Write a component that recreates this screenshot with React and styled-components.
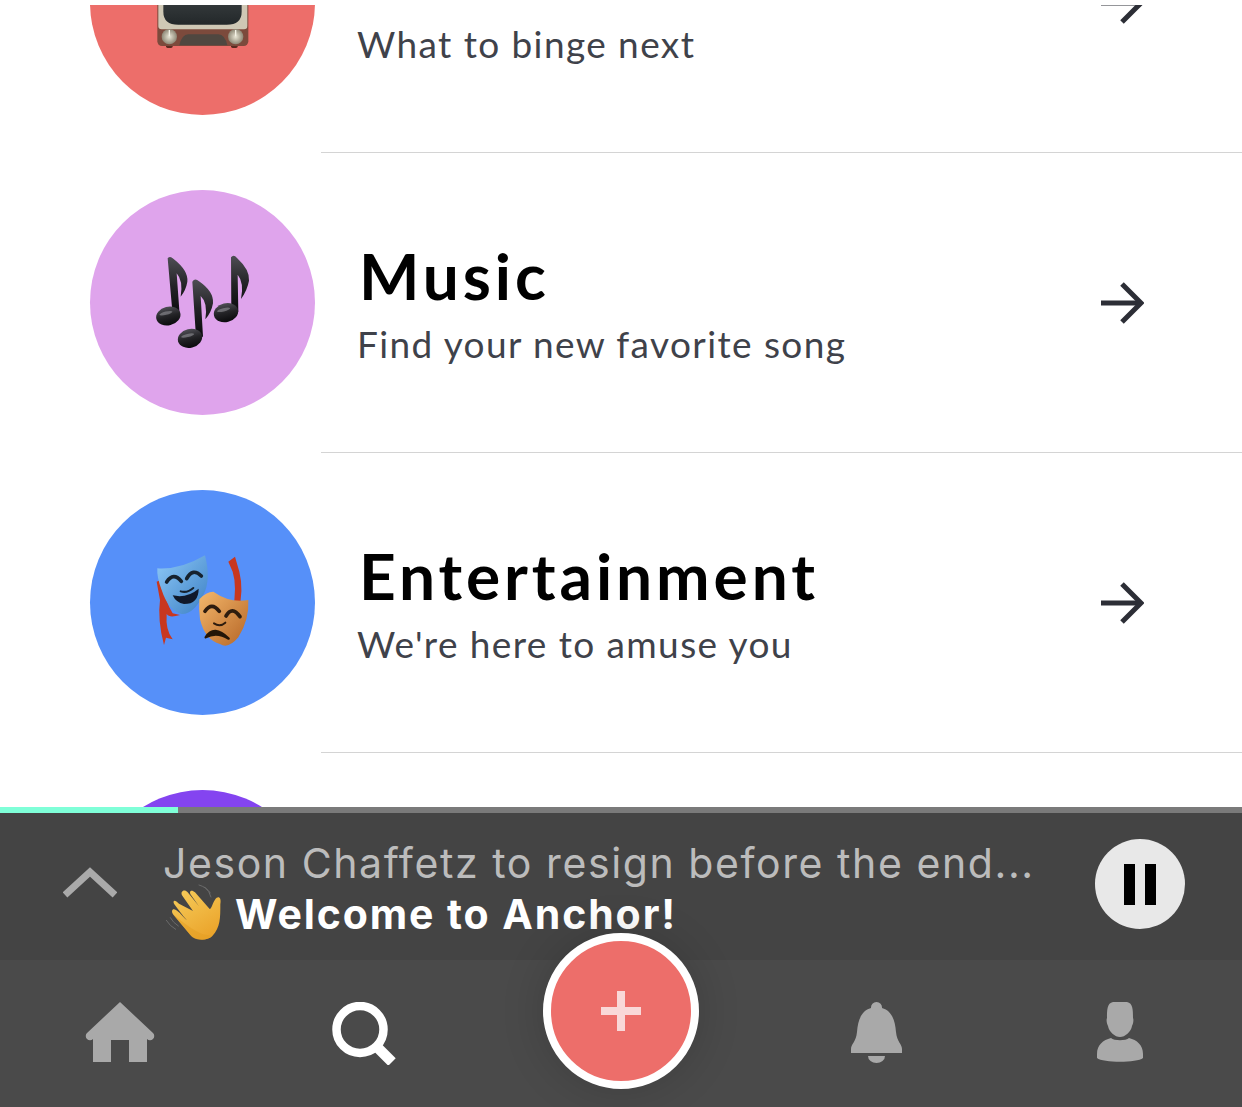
import React from "react";
import styled, { createGlobalStyle } from "styled-components";

const Global = createGlobalStyle`
  html, body { margin: 0; padding: 0; background: #fff; }
  body { font-family: "Lato", "Liberation Sans", sans-serif; }
`;

const Page = styled.div`
  position: relative;
  width: 1242px;
  height: 1107px;
  overflow: hidden;
  display: flex;
  flex-direction: column;
  background: #fff;
`;

const Viewport = styled.div`
  height: 802px;
  margin-top: 5px;
  overflow: hidden;
  flex: none;
`;

const List = styled.div`
  margin-top: -152px;
`;

const Row = styled.div`
  height: 300px;
  display: flex;
  align-items: center;
  padding-left: 90px;
  box-sizing: border-box;
`;

const Circle = styled.div`
  width: 225px;
  height: 225px;
  margin-bottom: 2px;
  border-radius: 50%;
  background: ${(p) => p.$color};
  flex: none;
  display: flex;
  align-items: center;
  justify-content: center;
  overflow: visible;
`;

const Body = styled.div`
  flex: 1;
  height: 300px;
  margin-left: 6px;
  padding: 0 98px 0 37px;
  display: flex;
  align-items: center;
  justify-content: space-between;
  border-bottom: 1px solid #d4d4d4;
  box-sizing: border-box;
`;

const Texts = styled.div`
  display: flex;
  flex-direction: column;
  gap: 11px;
  margin-top: 2px;
`;

const Title = styled.div`
  font-family: "Lato", sans-serif;
  font-weight: 700;
  font-size: 64px;
  line-height: 70px;
  letter-spacing: 3.9px;
  color: #000;
  padding-left: 1px;
`;

const Subtitle = styled.div`
  font-family: "Lato", sans-serif;
  font-size: 37px;
  line-height: 44px;
  letter-spacing: 1.4px;
  margin-left: -1px;
  color: #3f424a;
`;

const ProgressTrack = styled.div`
  height: 6px;
  background: #7a7a7a;
  flex: none;
`;

const ProgressFill = styled.div`
  height: 100%;
  background: #7fffd8;
`;

const Player = styled.div`
  height: 147px;
  flex: none;
  background: #444444;
  display: flex;
  align-items: flex-start;
  padding-left: 63px;
  padding-right: 57px;
  box-sizing: border-box;
`;

const ChevronWrap = styled.div`
  width: 54px;
  margin-top: 54px;
  flex: none;
  display: flex;
`;

const PlayerText = styled.div`
  margin-left: 46px;
  flex: 1;
  min-width: 0;
  padding-top: 25px;
`;

const Track = styled.div`
  font-family: "Inter", sans-serif;
  font-size: 41px;
  line-height: 50px;
  letter-spacing: 1.58px;
  color: #bcbcbc;
  white-space: nowrap;
`;

const Episode = styled.div`
  display: flex;
  align-items: center;
  margin-top: -7px;
  font-family: "Inter", sans-serif;
  font-weight: 700;
  font-size: 41px;
  line-height: 50px;
  letter-spacing: 1.9px;
  color: #fff;
  white-space: nowrap;
`;

const PauseBtn = styled.div`
  width: 90px;
  height: 90px;
  border-radius: 50%;
  background: #e8e8e8;
  margin-top: 26px;
  flex: none;
  display: flex;
  align-items: center;
  justify-content: center;
  gap: 10px;
`;

const PauseBar = styled.span`
  width: 11px;
  height: 41px;
  background: #000;
`;

const Nav = styled.div`
  height: 147px;
  flex: none;
  background: #4a4a4a;
  display: grid;
  grid-template-columns: 240px 248px 266px 244px 244px;
  justify-items: center;
  align-items: start;
  padding-top: 42px;
  box-sizing: border-box;
`;

const Fab = styled.div`
  position: absolute;
  left: 543px;
  top: 933px;
  width: 156px;
  height: 156px;
  box-sizing: border-box;
  border-radius: 50%;
  border: 8px solid #fff;
  background: #ed6e6a;
  box-shadow: 0 0 44px rgba(0, 0, 0, 0.16);
  display: flex;
  align-items: center;
  justify-content: center;
`;

const Arrow = () => (
  <svg width="44" height="44" viewBox="0 0 44 44" fill="none" stroke="#2c2e36" strokeWidth="5">
    <path d="M1 22 H40" />
    <path d="M22 3 L41 22 L22 41" />
  </svg>
);

const TV = () => (
  <svg width="125" height="125" viewBox="0 0 375 375">
    <defs>
      <linearGradient id="tvs" x1="0" y1="0" x2="0" y2="1">
        <stop offset="0" stopColor="#555a5c" />
        <stop offset="1" stopColor="#23282a" />
      </linearGradient>
      <radialGradient id="tvk">
        <stop offset="0" stopColor="#e9e6d6" />
        <stop offset="1" stopColor="#8d8775" />
      </radialGradient>
    </defs>
    <rect x="78" y="308" width="20" height="16" rx="5" fill="#5a2a20" />
    <rect x="273" y="308" width="20" height="16" rx="5" fill="#5a2a20" />
    <rect x="52" y="60" width="273" height="258" rx="14" fill="#7c4a3c" />
    <rect x="55" y="60" width="267" height="208" rx="10" fill="#cfc8b5" />
    <path d="M70 60 H305 V215 Q305 254 260 254 H115 Q70 254 70 215 Z" fill="url(#tvs)" />
    <path d="M118 316 Q125 284 145 283 H235 Q255 284 262 316 Z" fill="#4f4740" />
    <circle cx="88" cy="290" r="23" fill="url(#tvk)" />
    <circle cx="287" cy="290" r="23" fill="url(#tvk)" />
    <rect x="86" y="270" width="4" height="18" fill="#f4f2e6" />
    <rect x="285" y="270" width="4" height="18" fill="#f4f2e6" />
  </svg>
);

const Notes = () => (
  <svg width="125" height="125" viewBox="0 0 375 375">
    <defs>
      <linearGradient id="nt" x1="0" y1="0" x2="0" y2="1">
        <stop offset="0" stopColor="#4e4e54" />
        <stop offset="0.5" stopColor="#232326" />
        <stop offset="1" stopColor="#0a0a0c" />
      </linearGradient>
    </defs>
    {[
      { h: [85, 228], s: "M83 55 Q90 46 100 56 Q146 92 142 125 Q138 150 122 170 Q130 122 110 100 L119 225 L98 225 Z" },
      { h: [150, 295], s: "M157 125 Q165 112 177 124 Q222 155 219 190 Q214 218 196 238 Q204 188 182 168 L189 290 L168 290 Z" },
      { h: [258, 218], s: "M273 52 Q281 42 291 54 Q330 90 327 122 Q322 150 303 177 Q313 128 293 104 L295 215 L274 215 Z" },
    ].map((n, i) => (
      <g key={i} fill="url(#nt)">
        <path d={n.s} />
        <ellipse cx={n.h[0]} cy={n.h[1]} rx="37" ry="28" transform={`rotate(-14 ${n.h[0]} ${n.h[1]})`} />
        <ellipse cx={n.h[0] - 5} cy={n.h[1] - 10} rx="20" ry="5" fill="#9a9aa0" opacity="0.55" transform={`rotate(-14 ${n.h[0]} ${n.h[1]})`} />
      </g>
    ))}
  </svg>
);

const Masks = () => (
  <svg width="125" height="125" viewBox="0 0 375 375">
    <defs>
      <linearGradient id="mb" x1="0" y1="0" x2="1" y2="1">
        <stop offset="0" stopColor="#8fcaf8" />
        <stop offset="1" stopColor="#3b7fc4" />
      </linearGradient>
      <linearGradient id="mo" x1="0" y1="0" x2="1" y2="1">
        <stop offset="0" stopColor="#f4b86c" />
        <stop offset="1" stopColor="#b56526" />
      </linearGradient>
    </defs>
    <path d="M50 125 L62 120 Q78 190 98 220 L120 225 Q88 235 80 222 Q76 270 98 298 L78 293 L72 315 Q52 240 60 180 Z" fill="#c8371f" />
    <path d="M265 65 L285 50 L298 95 Q312 150 295 215 L278 215 Q292 140 278 95 Z" fill="#c8371f" />
    <path d="M52 85 Q120 90 195 46 Q214 120 190 165 Q160 224 125 222 Q85 212 65 150 Q50 112 52 85 Z" fill="url(#mb)" />
    <path d="M80 126 Q100 95 124 124" fill="none" stroke="#16222e" strokeWidth="11" strokeLinecap="round" />
    <path d="M140 116 Q158 82 184 108" fill="none" stroke="#16222e" strokeWidth="11" strokeLinecap="round" />
    <path d="M122 154 Q142 160 160 144" fill="none" stroke="#16222e" strokeWidth="6" strokeLinecap="round" />
    <path d="M98 166 Q140 176 176 146 Q176 192 132 192 Q108 188 98 166 Z" fill="#10192a" />
    <path d="M178 178 Q198 155 220 155 Q270 190 325 180 Q328 240 295 292 Q265 328 240 312 Q195 300 180 238 Q176 205 178 178 Z" fill="url(#mo)" />
    <path d="M195 214 Q215 184 238 214" fill="none" stroke="#2e1c0e" strokeWidth="11" strokeLinecap="round" />
    <path d="M258 228 Q276 196 300 230" fill="none" stroke="#2e1c0e" strokeWidth="11" strokeLinecap="round" />
    <path d="M222 250 Q240 262 256 248" fill="none" stroke="#2e1c0e" strokeWidth="6" strokeLinecap="round" />
    <path d="M197 292 Q222 252 266 296 Q230 274 197 292 Z" fill="#241608" stroke="#241608" strokeWidth="7" strokeLinejoin="round" />
  </svg>
);

const WaveIcon = styled.svg`
  flex: none;
  margin-right: 6px;
`;

const Wave = () => (
  <WaveIcon width="66" height="66" viewBox="0 0 198 198">
    <defs>
      <linearGradient id="hd" x1="0" y1="0" x2="0.6" y2="1">
        <stop offset="0" stopColor="#f6cd5c" />
        <stop offset="1" stopColor="#eba52c" />
      </linearGradient>
    </defs>
    <g fill="none" stroke="#6a6a6a" strokeWidth="3" strokeLinecap="round">
      <path d="M125 18 Q140 30 144 48" />
      <path d="M108 12 Q130 18 142 36" />
      <path d="M10 118 Q20 135 38 145" />
      <path d="M22 110 Q30 125 46 135" />
    </g>
    <path
      d="M48 68 C34 52 28 60 34 70 C45 85 60 105 72 118 C60 108 48 92 40 88 C28 80 24 90 30 100 L82 162 C95 178 130 182 148 165 C172 140 172 110 172 70 C176 50 166 42 156 56 C148 68 146 82 140 84 L96 34 C86 24 76 30 84 42 L108 76 L74 34 C64 22 50 32 58 44 L90 90 Z"
      fill="url(#hd)"
    />
    <path d="M30 100 L84 164 C95 178 130 182 148 165 L120 160 Q90 150 30 100 Z" fill="#e49d22" opacity="0.5" />
  </WaveIcon>
);

const Chevron = () => (
  <svg width="54" height="31" viewBox="0 0 54 31" fill="none" stroke="#aaaaaa" strokeWidth="7">
    <path d="M2 28 L27 5 L52 28" />
  </svg>
);

const Home = () => (
  <svg width="70" height="61" viewBox="0 0 70 61" fill="#a9a9a9">
    <path d="M35 0 L68 31 A4 4 0 0 1 62 37 V60 H44 V38 H26 V60 H8 V37 A4 4 0 0 1 2 31 Z" />
  </svg>
);

const Search = () => (
  <svg width="64" height="63" viewBox="0 0 64 63" fill="none" stroke="#fff">
    <circle cx="28" cy="27.5" r="23.5" strokeWidth="8.5" />
    <path d="M44 44 L60 60" strokeWidth="10.5" />
  </svg>
);

const Bell = () => (
  <svg width="53" height="61" viewBox="0 0 53 61" fill="#a9a9a9">
    <path d="M26.5 0 A5.5 5.5 0 0 1 32 6 C42 9 45 18 46 30 C47 40 52 42 52 47 V51 H1 V47 C1 42 6 40 7 30 C8 18 11 9 21 6 A5.5 5.5 0 0 1 26.5 0 Z" />
    <path d="M18 54 H35 A8.5 7 0 0 1 18 54 Z" />
  </svg>
);

const User = () => (
  <svg width="46" height="61" viewBox="0 0 46 61" fill="#a9a9a9">
    <path d="M16 0 H30 C36 1 36 8 36 16 C37 18 36 22 35 24 C34 30 28 35 23 35 C18 35 12 30 11 24 C10 22 9 18 10 16 C10 8 10 1 16 0 Z" />
    <path d="M14 36 C17 39 29 39 32 36 C40 38 46 43 46 52 V56 C40 61 6 61 0 56 V52 C0 43 6 38 14 36 Z" />
  </svg>
);

const Plus = () => (
  <svg width="40" height="40" viewBox="0 0 40 40" fill="#f9d8d8">
    <path d="M16 0 H24 V16 H40 V24 H24 V40 H16 V24 H0 V16 H16 Z" />
  </svg>
);

const rows = [
  { color: "#ed6e6a", icon: <TV />, title: "TV & Film", sub: "What to binge next" },
  { color: "#dfa4ec", icon: <Notes />, title: "Music", sub: "Find your new favorite song" },
  { color: "#5690f9", icon: <Masks />, title: "Entertainment", sub: "We're here to amuse you" },
  { color: "#8444f0", icon: null, title: "Politics", sub: "" },
];

export default function App() {
  return (
    <Page>
      <Global />
      <Viewport>
        <List>
          {rows.map((r) => (
            <Row key={r.title}>
              <Circle $color={r.color}>{r.icon}</Circle>
              <Body>
                <Texts>
                  <Title>{r.title}</Title>
                  <Subtitle>{r.sub}</Subtitle>
                </Texts>
                <Arrow />
              </Body>
            </Row>
          ))}
        </List>
      </Viewport>
      <ProgressTrack>
        <ProgressFill style={{ width: "178px" }} />
      </ProgressTrack>
      <Player>
        <ChevronWrap>
          <Chevron />
        </ChevronWrap>
        <PlayerText>
          <Track>Jeson Chaffetz to resign before the end...</Track>
          <Episode>
            <Wave />
            Welcome to Anchor!
          </Episode>
        </PlayerText>
        <PauseBtn>
          <PauseBar />
          <PauseBar />
        </PauseBtn>
      </Player>
      <Nav>
        <Home />
        <Search />
        <span />
        <Bell />
        <User />
      </Nav>
      <Fab>
        <Plus />
      </Fab>
    </Page>
  );
}
